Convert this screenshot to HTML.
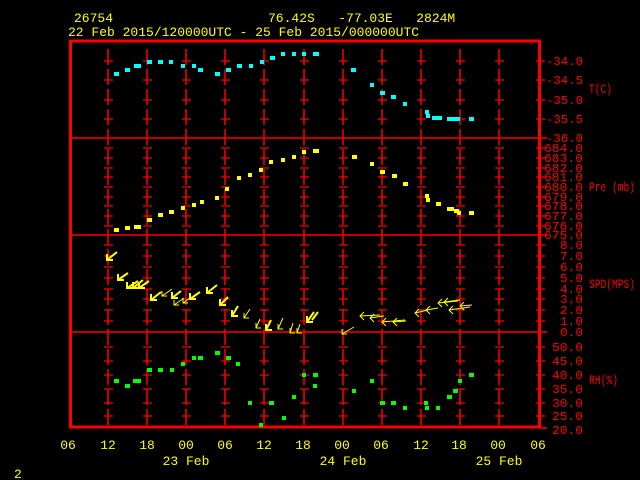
<!DOCTYPE html>
<html><head><meta charset="utf-8"><style>
html,body{margin:0;padding:0;background:#000;width:640px;height:480px;overflow:hidden}
svg{display:block}
text{font-family:"Liberation Mono",monospace;font-size:13px}
.y{fill:#ffff00}.r{fill:#ff0000}
.l5,.l4,.l3{font-size:11.5px}
</style></head><body>
<svg width="640" height="480" viewBox="0 0 640 480" xmlns="http://www.w3.org/2000/svg">
<rect width="640" height="480" fill="#000"/>
<text class="y" x="74" y="22">26754</text>
<text class="y" x="268" y="22" xml:space="preserve">76.42S   -77.03E   2824M</text>
<text class="y" x="68" y="36">22 Feb 2015/120000UTC - 25 Feb 2015/000000UTC</text>

<g stroke="#ff0000" stroke-width="1.5" stroke-dasharray="16 4">
<line x1="108" y1="49" x2="108" y2="426"/><line x1="147" y1="49" x2="147" y2="426"/>
<line x1="186" y1="49" x2="186" y2="426"/><line x1="225" y1="49" x2="225" y2="426"/>
<line x1="264" y1="49" x2="264" y2="426"/><line x1="304" y1="49" x2="304" y2="426"/>
<line x1="343" y1="49" x2="343" y2="426"/><line x1="382" y1="49" x2="382" y2="426"/>
<line x1="421" y1="49" x2="421" y2="426"/><line x1="460" y1="49" x2="460" y2="426"/>
<line x1="499" y1="49" x2="499" y2="426"/>
</g>
<g stroke="#ff0000" stroke-width="1.3">
<path id="tk" d="M104 61h9M104 80h9M104 100h9M104 119h9M104 148h9M104 158h9M104 168h9M104 177h9M104 187h9M104 197h9M104 206h9M104 216h9M104 226h9M104 245h9M104 256h9M104 267h9M104 278h9M104 289h9M104 299h9M104 310h9M104 321h9M104 347h9M104 361h9M104 375h9M104 389h9M104 403h9M104 416h9"/>
</g>
<g stroke="#ff0000" stroke-width="1.3">
<use href="#tk" x="39"/><use href="#tk" x="78"/><use href="#tk" x="117"/><use href="#tk" x="156"/><use href="#tk" x="196"/><use href="#tk" x="235"/><use href="#tk" x="274"/><use href="#tk" x="313"/><use href="#tk" x="352"/><use href="#tk" x="391"/>
<use href="#tk" x="432"/>
</g>
<g stroke="#ff0000" stroke-width="1.5">
<line x1="70" y1="138" x2="547" y2="138"/><line x1="70" y1="235" x2="547" y2="235"/>
<line x1="70" y1="332" x2="547" y2="332"/><line x1="540" y1="428" x2="547" y2="428"/>
</g>
<rect x="70.5" y="41" width="469" height="386" fill="none" stroke="#ff0000" stroke-width="3"/>

<g class="r">
<text class="l5" x="546" y="65" textLength="37" lengthAdjust="spacingAndGlyphs">-34.0</text>
<text class="l5" x="546" y="84" textLength="37" lengthAdjust="spacingAndGlyphs">-34.5</text>
<text class="l5" x="546" y="104" textLength="37" lengthAdjust="spacingAndGlyphs">-35.0</text>
<text class="l5" x="546" y="123" textLength="37" lengthAdjust="spacingAndGlyphs">-35.5</text>
<text class="l5" x="546" y="142" textLength="37" lengthAdjust="spacingAndGlyphs">-36.0</text>
<text class="l5" x="544" y="152" textLength="39" lengthAdjust="spacingAndGlyphs">684.0</text>
<text class="l5" x="544" y="162" textLength="39" lengthAdjust="spacingAndGlyphs">683.0</text>
<text class="l5" x="544" y="172" textLength="39" lengthAdjust="spacingAndGlyphs">682.0</text>
<text class="l5" x="544" y="181" textLength="39" lengthAdjust="spacingAndGlyphs">681.0</text>
<text class="l5" x="544" y="191" textLength="39" lengthAdjust="spacingAndGlyphs">680.0</text>
<text class="l5" x="544" y="201" textLength="39" lengthAdjust="spacingAndGlyphs">679.0</text>
<text class="l5" x="544" y="210" textLength="39" lengthAdjust="spacingAndGlyphs">678.0</text>
<text class="l5" x="544" y="220" textLength="39" lengthAdjust="spacingAndGlyphs">677.0</text>
<text class="l5" x="544" y="230" textLength="39" lengthAdjust="spacingAndGlyphs">676.0</text>
<text class="l5" x="544" y="239" textLength="39" lengthAdjust="spacingAndGlyphs">675.0</text>
<text class="l3" x="560" y="249" textLength="23" lengthAdjust="spacingAndGlyphs">8.0</text>
<text class="l3" x="560" y="260" textLength="23" lengthAdjust="spacingAndGlyphs">7.0</text>
<text class="l3" x="560" y="271" textLength="23" lengthAdjust="spacingAndGlyphs">6.0</text>
<text class="l3" x="560" y="282" textLength="23" lengthAdjust="spacingAndGlyphs">5.0</text>
<text class="l3" x="560" y="293" textLength="23" lengthAdjust="spacingAndGlyphs">4.0</text>
<text class="l3" x="560" y="303" textLength="23" lengthAdjust="spacingAndGlyphs">3.0</text>
<text class="l3" x="560" y="314" textLength="23" lengthAdjust="spacingAndGlyphs">2.0</text>
<text class="l3" x="560" y="325" textLength="23" lengthAdjust="spacingAndGlyphs">1.0</text>
<text class="l3" x="560" y="336" textLength="23" lengthAdjust="spacingAndGlyphs">0.0</text>
<text class="l4" x="552" y="351" textLength="31" lengthAdjust="spacingAndGlyphs">50.0</text>
<text class="l4" x="552" y="365" textLength="31" lengthAdjust="spacingAndGlyphs">45.0</text>
<text class="l4" x="552" y="379" textLength="31" lengthAdjust="spacingAndGlyphs">40.0</text>
<text class="l4" x="552" y="393" textLength="31" lengthAdjust="spacingAndGlyphs">35.0</text>
<text class="l4" x="552" y="407" textLength="31" lengthAdjust="spacingAndGlyphs">30.0</text>
<text class="l4" x="552" y="420" textLength="31" lengthAdjust="spacingAndGlyphs">25.0</text>
<text class="l4" x="552" y="434" textLength="31" lengthAdjust="spacingAndGlyphs">20.0</text>
</g>
<g class="r" style="font-size:10px">
<text x="589" y="93" textLength="23" lengthAdjust="spacingAndGlyphs">T(C)</text>
<text x="589" y="191" textLength="46" lengthAdjust="spacingAndGlyphs">Pre (mb)</text>
<text x="589" y="288" textLength="46" lengthAdjust="spacingAndGlyphs">SPD(MPS)</text>
<text x="589" y="384" textLength="29" lengthAdjust="spacingAndGlyphs">RH(%)</text>
</g>

<g class="y" text-anchor="middle">
<text x="68" y="449">06</text><text x="108" y="449">12</text><text x="147" y="449">18</text><text x="186" y="449">00</text><text x="225" y="449">06</text><text x="264" y="449">12</text><text x="303" y="449">18</text><text x="342" y="449">00</text><text x="381" y="449">06</text><text x="421" y="449">12</text><text x="459" y="449">18</text><text x="498" y="449">00</text><text x="538" y="449">06</text>
<text x="186" y="465">23 Feb</text><text x="343" y="465">24 Feb</text><text x="499" y="465">25 Feb</text>
</g>
<text class="y" x="14" y="478">2</text>

<g fill="#00ffff">
<rect x="114" y="72" width="5" height="4"/><rect x="125" y="68" width="5" height="4"/><rect x="134" y="64" width="7" height="4"/><rect x="147" y="60" width="5" height="4"/><rect x="158" y="60" width="5" height="4"/><rect x="169" y="60" width="4" height="4"/><rect x="181" y="64" width="4" height="4"/><rect x="192" y="64" width="4" height="4"/><rect x="198" y="68" width="5" height="4"/><rect x="215" y="72" width="5" height="4"/><rect x="226" y="68" width="5" height="4"/><rect x="237" y="64" width="5" height="4"/><rect x="249" y="64" width="4" height="4"/><rect x="260" y="60" width="4" height="4"/><rect x="270" y="56" width="5" height="4"/><rect x="281" y="52" width="4" height="4"/><rect x="292" y="52" width="4" height="4"/><rect x="302" y="52" width="4" height="4"/><rect x="313" y="52" width="6" height="4"/>
<rect x="351" y="68" width="5" height="4"/><rect x="370" y="83" width="4" height="4"/><rect x="380" y="91" width="5" height="4"/><rect x="391" y="95" width="5" height="4"/><rect x="403" y="102" width="4" height="4"/><rect x="425" y="110" width="4" height="4"/><rect x="426" y="114" width="4" height="4"/><rect x="432" y="116" width="10" height="4"/><rect x="447" y="117" width="13" height="4"/><rect x="469" y="117" width="5" height="4"/>
</g>
<g fill="#ffff00">
<rect x="114" y="228" width="5" height="4"/><rect x="125" y="226" width="5" height="4"/><rect x="134" y="225" width="7" height="4"/><rect x="147" y="218" width="5" height="4"/><rect x="158" y="213" width="5" height="4"/><rect x="169" y="210" width="5" height="4"/><rect x="181" y="206" width="4" height="4"/><rect x="192" y="203" width="4" height="4"/><rect x="200" y="200" width="4" height="4"/><rect x="215" y="196" width="4" height="4"/><rect x="225" y="187" width="4" height="4"/><rect x="237" y="176" width="4" height="4"/><rect x="248" y="173" width="4" height="4"/><rect x="259" y="168" width="4" height="4"/><rect x="269" y="160" width="4" height="4"/><rect x="281" y="158" width="4" height="4"/><rect x="292" y="155" width="4" height="4"/><rect x="302" y="150" width="4" height="4"/><rect x="313" y="149" width="6" height="4"/>
<rect x="352" y="155" width="5" height="4"/><rect x="370" y="162" width="4" height="4"/><rect x="380" y="170" width="5" height="4"/><rect x="392" y="174" width="5" height="4"/><rect x="403" y="182" width="5" height="4"/><rect x="425" y="194" width="4" height="4"/><rect x="426" y="198" width="4" height="4"/><rect x="436" y="202" width="5" height="4"/><rect x="447" y="207" width="7" height="4"/><rect x="454" y="209" width="5" height="4"/><rect x="457" y="211" width="4" height="4"/><rect x="469" y="211" width="5" height="4"/>
</g>
<g fill="#00ff00">
<rect x="114" y="379" width="5" height="4"/><rect x="125" y="384" width="5" height="4"/><rect x="133" y="379" width="8" height="4"/><rect x="147" y="368" width="5" height="4"/><rect x="158" y="368" width="5" height="4"/><rect x="170" y="368" width="4" height="4"/><rect x="181" y="362" width="4" height="4"/><rect x="192" y="356" width="4" height="4"/><rect x="198" y="356" width="5" height="4"/><rect x="215" y="351" width="5" height="4"/><rect x="226" y="356" width="5" height="4"/><rect x="236" y="362" width="4" height="4"/>
<rect x="248" y="401" width="4" height="4"/><rect x="259" y="423" width="4" height="4"/><rect x="269" y="401" width="5" height="4"/><rect x="282" y="416" width="4" height="4"/><rect x="292" y="395" width="4" height="4"/><rect x="302" y="373" width="4" height="4"/><rect x="313" y="373" width="5" height="4"/><rect x="313" y="384" width="4" height="4"/>
<rect x="352" y="389" width="4" height="4"/><rect x="370" y="379" width="4" height="4"/><rect x="380" y="401" width="5" height="4"/><rect x="391" y="401" width="5" height="4"/><rect x="403" y="406" width="4" height="4"/><rect x="424" y="401" width="4" height="4"/><rect x="425" y="406" width="4" height="4"/><rect x="436" y="406" width="4" height="4"/><rect x="447" y="395" width="5" height="4"/><rect x="453" y="389" width="5" height="4"/><rect x="458" y="379" width="4" height="4"/><rect x="469" y="373" width="5" height="4"/>
</g>

<g stroke="#ffff00" fill="none" stroke-width="2">
<path d="M107 260L117 252M107 254v6h6"/>
<path d="M118 280L128 273M118 274v6h6"/>
<path d="M127 288L138 281M127 282v6h6"/>
<path d="M133 288L143 280M133 282v6h6"/>
<path d="M139 288L149 281M139 282v6h6"/>
<path d="M151 300L161 292M151 294v6h6"/>
<path d="M172 298L181 291M172 292v6h6"/>
<path d="M190 299L200 292M190 293v6h6"/>
<path d="M207 293L217 285M207 287v6h6"/>
<path d="M220 305L228 297M220 299v6h6"/>
<path d="M232 316L238 306M232 310v6h6"/>
<path d="M266 330L271 320M266 324v6h6"/>
<path d="M307 322L314 312M307 316v6h6"/>
<path d="M312 320L318 312"/>
</g>
<g stroke="#ffff00" fill="none" stroke-width="1">
<path d="M162 296L172 289M162 291v5h5"/>
<path d="M174 305L184 298M174 300v5h5"/>
<path d="M183 303L190 298M183 298v5h5"/>
<path d="M244 318L250 309M244 313v5h5"/>
<path d="M256 328L260 319M256 323v5h5"/>
<path d="M278 329L283 318M278 324v5h5"/>
<path d="M290 333L293 323M290 328v5h5"/>
<path d="M297 333L300 324M297 328v5h5"/>
<path d="M342 334L354 327M342 329v5h5"/>
<path d="M360 316L380 315M364 312l-4 4 4 4"/>
<path d="M370 318L384 316M374 314l-4 4 4 4"/>
<path d="M382 322L405 320M386 318l-4 4 4 4"/>
<path d="M393 322L406 321M397 318l-4 4 4 4"/>
<path d="M415 313L428 310M419 309l-4 4 4 4"/>
<path d="M426 310L438 308M430 306l-4 4 4 4"/>
<path d="M438 303L458 301M442 299l-4 4 4 4"/>
<path d="M444 302L460 300M448 298l-4 4 4 4"/>
<path d="M449 310L470 307M453 306l-4 4 4 4"/>
<path d="M460 306L472 305M464 302l-4 4 4 4"/>
</g>
</svg>
</body></html>
